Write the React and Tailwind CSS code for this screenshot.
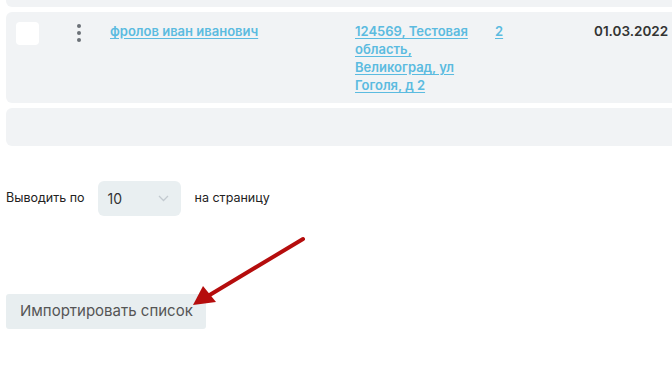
import React from "react";

function Dots() {
  return (
    <div className="flex flex-col items-center gap-[3px] pt-[2px] w-[6px]">
      <span className="block w-[4px] h-[4px] rounded-full bg-[#6b7177]" />
      <span className="block w-[4px] h-[4px] rounded-full bg-[#6b7177]" />
      <span className="block w-[4px] h-[4px] rounded-full bg-[#6b7177]" />
    </div>
  );
}

function Chevron() {
  return (
    <svg width="11" height="7" viewBox="0 0 11 7" fill="none">
      <path d="M1 1l4.5 4.5L10 1" stroke="#c3cad0" strokeWidth="1.3" />
    </svg>
  );
}

export default function App() {
  const link = "text-[#5bbbe0] underline underline-offset-2 font-semibold";
  return (
    <div
      className="relative w-[672px] h-[373px] overflow-hidden bg-white pl-[6px] text-[13px]"
      style={{ fontFamily: "Inter, 'Noto Sans', sans-serif" }}
    >
      {/* table rows - start */}
      <div className="w-[720px] flex flex-col gap-[5px]">
        <div className="h-[7px] bg-[#f1f3f5] rounded-b-md" />
        <div className="grid grid-cols-[60px_34px_245px_140px_99px_140px] bg-[#f1f3f5] rounded-md pl-[10px] pt-[10px] pb-[9px] leading-[18px]">
          <div className="w-[23px] h-[23px] bg-white rounded-[4px]" />
          <Dots />
          <div>
            <a className={link}>фролов иван иванович</a>
          </div>
          <div className="w-[118px]">
            <a className={link}>124569, Тестовая область, Великоград, ул Гоголя, д 2</a>
          </div>
          <div>
            <a className={link}>2</a>
          </div>
          <div className="text-[#333] font-semibold text-[13.5px]">01.03.2022</div>
        </div>
        <div className="h-[38px] bg-[#f1f3f5] rounded-md" />
      </div>
      {/* table rows - end */}

      <div className="flex items-center mt-[35px] text-[12.5px] text-[#222]">
        <span>Выводить по</span>
        <div className="ml-[13px] w-[83px] h-[35px] bg-[#e9eff1] rounded-md flex items-center justify-between pl-[10px] pr-[12px] text-[14px] text-[#333]">
          <span>10</span>
          <Chevron />
        </div>
        <span className="ml-[14px]">на страницу</span>
      </div>

      <button className="mt-[78px] w-[200px] h-[35px] bg-[#e8eef0] rounded-[3px] text-left pl-[14px] text-[15px] text-[#555]">
        Импортировать список
      </button>

      {/* annotation arrow */}
      <svg className="absolute left-0 top-0" width="672" height="373" viewBox="0 0 672 373">
        <path d="M303 239 L208 296" stroke="#b50d0d" strokeWidth="4" strokeLinecap="round" />
        <polygon points="193,305 203,286 216,302" fill="#b50d0d" />
      </svg>
    </div>
  );
}
